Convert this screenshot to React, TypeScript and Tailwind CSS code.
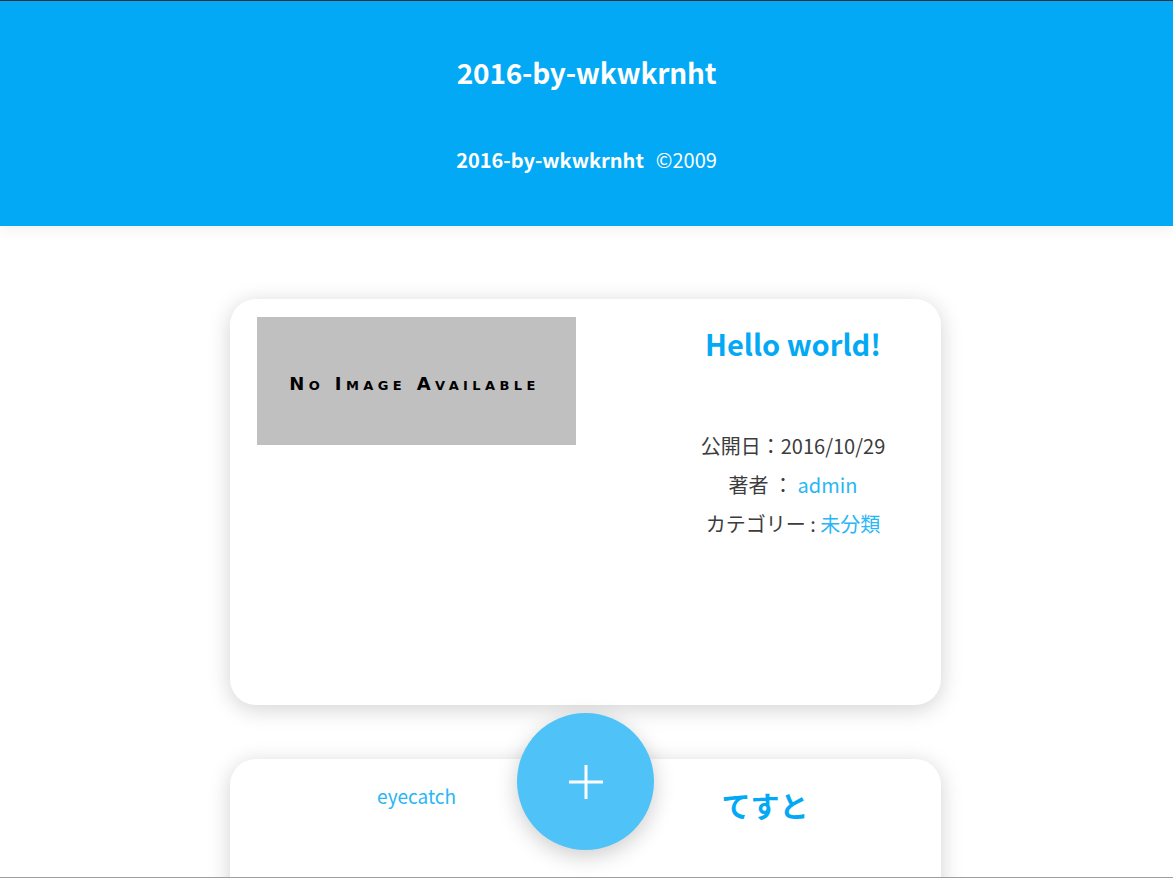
import React from "react";

export default function App() {
  const font = { fontFamily: '"Noto Sans CJK JP", "Noto Sans", sans-serif' };
  return (
    <div className="w-[1173px] h-[878px] overflow-hidden bg-white relative border-t border-t-[#263238] border-b border-b-[#9e9e9e]" style={font}>
      <header className="h-[225px] bg-[#03a9f4] text-white flex flex-col items-center shadow-[0_4px_14px_rgba(0,0,0,0.06)] relative z-10">
        <h1 className="mt-[52px] text-[28px] leading-[38px] font-bold tracking-[-0.2px]">2016-by-wkwkrnht</h1>
        <p className="mt-[56px] text-[20px] leading-[26px]">
          <span className="font-bold">2016-by-wkwkrnht</span>
          <span className="ml-[12px]">©2009</span>
        </p>
      </header>

      <main className="flex flex-col items-center pt-[73px] pr-[2px] gap-[54px]">
        <article className="w-[711px] h-[406px] bg-white rounded-[26px] shadow-[0_4px_22px_rgba(0,0,0,0.18)] flex pt-[18px] pl-[27px]">
          <div className="w-[319px] h-[128px] bg-[#c0c0c0] flex items-center justify-center shrink-0 pt-[4px] pr-[4px]">
            <span className="text-black text-[18px] font-semibold tracking-[4.4px] [font-variant:small-caps]" style={{ fontFamily: '"DejaVu Sans", sans-serif' }}>No Image Available</span>
          </div>
          <div className="ml-[69px] w-[296px] flex flex-col items-center">
            <h2 className="mt-[5px] text-[#03a9f4] text-[29px] leading-[42px] font-bold">Hello world!</h2>
            <div className="mt-[62px] text-[#3c3c3c] text-[20px] leading-[39px] text-center">
              <p>公開日：2016/10/29</p>
              <p>著者 ： <span className="text-[#29b6f6]">admin</span></p>
              <p>カテゴリー : <span className="text-[#29b6f6]">未分類</span></p>
            </div>
          </div>
        </article>

        <article className="w-[711px] h-[406px] bg-white rounded-[26px] shadow-[0_4px_22px_rgba(0,0,0,0.18)] flex pl-[27px] pt-[23px]">
          <div className="w-[319px] flex justify-center shrink-0">
            <span className="text-[#29b6f6] text-[19px] leading-[28px]">eyecatch</span>
          </div>
          <div className="ml-[13px] w-[352px] flex justify-center">
            <h2 className="mt-[2px] text-[#03a9f4] text-[29px] leading-[42px] font-bold">てすと</h2>
          </div>
        </article>
      </main>

      <button className="absolute left-[517px] top-[712px] w-[137px] h-[137px] rounded-full bg-[#4fc3f7] shadow-[0_6px_22px_rgba(0,0,0,0.2)] flex items-center justify-center z-20">
        <svg width="36" height="36" viewBox="0 0 36 36">
          <path d="M18 1v34M1 18h34" stroke="white" strokeWidth="3" />
        </svg>
      </button>
    </div>
  );
}
